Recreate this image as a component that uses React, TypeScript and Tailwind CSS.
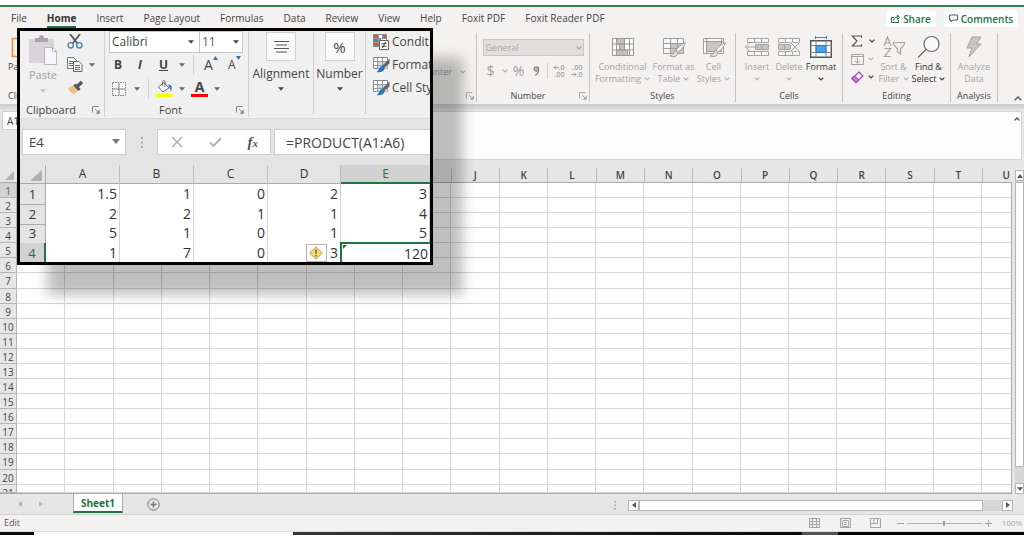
import React from "react";

const COLUMNS = "ABCDEFGHIJKLMNOPQRSTU".split("");
const ROWS = Array.from({ length: 21 }, (_, i) => i + 1);
const TABS = ["File", "Home", "Insert", "Page Layout", "Formulas", "Data", "Review", "View", "Help", "Foxit PDF", "Foxit Reader PDF"];

const CELLS: string[][] = [
  ["1.5", "1", "0", "2", "3"],
  ["2", "2", "1", "1", "4"],
  ["5", "1", "0", "1", "5"],
  ["1", "7", "0", "3", "120"],
];

type Kids = { children?: React.ReactNode };

function Chevron({ className = "text-[#b5b3b1]" }: { className?: string }) {
  return (
    <svg viewBox="0 0 6 4" className={`inline-block h-1 w-1.5 shrink-0 ${className}`} fill="none" stroke="currentColor" strokeWidth="1.3">
      <path d="M.7.6 3 2.9 5.3.6" />
    </svg>
  );
}

function Caret({ className = "text-[#666]" }: { className?: string }) {
  return (
    <svg viewBox="0 0 6 4" className={`h-1 w-1.5 shrink-0 ${className}`} fill="currentColor">
      <path d="M0 .3h6L3 3.7z" />
    </svg>
  );
}

function Launcher({ className = "text-[#a9a9a9]" }: { className?: string }) {
  return (
    <svg viewBox="0 0 8 8" className={`size-2 ${className}`} fill="none" stroke="currentColor">
      <path d="M.5 6.5v-6h6M3 3l3 3" />
      <path d="M7.8 3.5v4.3H3.5z" fill="currentColor" stroke="none" />
    </svg>
  );
}

/* ---------- main ribbon ---------- */

function Group({ label, width, launcher, children }: Kids & { label: string; width: string; launcher?: boolean }) {
  return (
    <section aria-label={label} className={`flex h-[69px] shrink-0 flex-col border-r border-[#c4c2c0] ${width}`}>
      <div className="flex h-[57px] shrink-0 justify-center">{children}</div>
      <div className="flex items-center text-center text-[9px] font-medium leading-[12px] text-[#444]">
        <span className="flex-1">{label}</span>
        {launcher && (
          <button aria-label={`${label} settings`} className="mr-[2px] block">
            <Launcher />
          </button>
        )}
      </div>
    </section>
  );
}

function BigButton({ icon, lines, width, active, arrow }: { icon: React.ReactNode; lines: string[]; width: string; active?: boolean; arrow?: "inline" | "below" }) {
  return (
    <button className={`flex flex-col items-center whitespace-nowrap pt-[3px] text-[9px] leading-[12px] ${width} ${active ? "font-medium text-[#333]" : "text-[#a5a3a1]"}`}>
      <span className="mb-[3px] flex h-[22px] items-center">{icon}</span>
      <span>{lines[0]}</span>
      <span className="flex h-3 items-center gap-[3px]">
        {lines[1]}
        {arrow && <Chevron className={active ? "text-[#444]" : "text-[#b5b3b1]"} />}
      </span>
    </button>
  );
}

function ConditionalIcon() {
  return (
    <svg viewBox="0 0 24 20" className="h-5 w-6" fill="none" stroke="#9a9896">
      <path d="M1.5 1.5h21v17h-21zM1.5 7h21M1.5 13h21M5.500 1.500v17M18.500 1.500v17" fill="#fafafa" />
      <path d="M5.500 1.500h8V7h-8zM5.500 13h11v5.500h-11zM8.500 7h5v6h-5z" fill="#c2c0be" />
    </svg>
  );
}

function TableBrushIcon({ wide }: { wide?: boolean }) {
  return (
    <svg viewBox="0 0 26 22" className="h-[22px] w-[26px]" fill="none" stroke="#a09e9c">
      <path d="M2.500 2.500h20v15h-20z" fill="#f8f8f8" />
      {wide ? <path d="M5.500 5.500h15v10h-15z" fill="#c8c6c4" /> : <path d="M9.500 7.500h13v10h-13z" fill="#c8c6c4" />}
      <path d={wide ? "M2.500 5.500h20M5.500 2.500v15M20.500 2.500v5" : "M2.500 7.500h20M2.500 12.500h20M9.500 2.500v15M16.500 2.500v15"} />
      <path d="M24.500 6.500c-4 1.500-8 5-9.500 8l2 1.800c3-2 6.500-6 7.500-9.800z" fill="#f3f2f1" />
      <path d="M15 14.500c-2.500 0-2.500 4.500-6 5.500 3.500 1.500 8 .3 8-3.700z" fill="#dddbd9" />
    </svg>
  );
}

function InsertIcon() {
  return (
    <svg viewBox="0 0 26 20" className="h-5 w-[26px]" fill="none" stroke="#a5a3a1">
      <path d="M3.500 1.500h21v4h-21zM3.500 14.500h21v4h-21zM10.500 1.500v4M17.500 1.500v4M10.500 14.500v4M17.500 14.500v4" fill="#fafafa" />
      <path d="M11.500 7.500h13v5h-13z" fill="#c8c6c4" />
      <path d="M18 7.500v5M14 10H1.500M5.500 6l-4 4 4 4" />
    </svg>
  );
}

function DeleteIcon() {
  return (
    <svg viewBox="0 0 26 20" className="h-5 w-[26px]" fill="none" stroke="#a5a3a1">
      <path d="M2.500 1.500h21v4h-21zM2.500 14.500h21v4h-21zM9.500 1.500v4M16.500 1.500v4M9.500 14.500v4M16.500 14.500v4" fill="#fafafa" />
      <path d="M2.500 7.500h12v5h-12z" fill="#c8c6c4" />
      <path d="M8.500 7.500v5" />
      <path d="m15 6 8 8M23 6l-8 8" stroke="#f3f2f1" strokeWidth="3" />
      <path d="m15 6 8 8M23 6l-8 8" />
    </svg>
  );
}

function FormatIcon() {
  return (
    <svg viewBox="0 0 24 24" className="h-6 w-6" fill="none">
      <path d="M6 2.500h12M6.500 1v3M17.500 1v3" stroke="#2f8fd6" />
      <path d="M1.700 5.700h20.600v16.600H1.700z" fill="#fff" stroke="#555" strokeWidth="1.400" />
      <path d="M7 5.500v17M17 5.500v17M1.500 10.500h21M1.500 17.500h21" stroke="#888" />
      <path d="M7 10.500h10v7H7z" fill="#4ba3ea" stroke="#1f7ac8" />
    </svg>
  );
}

function SortIcon() {
  return (
    <svg viewBox="0 0 24 22" className="h-[22px] w-6" fill="none" stroke="#a5a3a1" strokeWidth="1.200">
      <path d="m2 10 3.500-9L9 10M3.200 7h4.600M2.500 12.500h6L2.500 20.500h6.300M11.500 6.500h11v1.800L18.500 13v5l-3-2v-3l-4-4.700z" />
    </svg>
  );
}

function DecimalButton({ label, top, bottom, arrowOnTop }: { label: string; top: string; bottom: string; arrowOnTop?: boolean }) {
  const arrow = (
    <svg viewBox="0 0 6 5" className="h-[5px] w-1.5" fill="none" stroke="currentColor">
      <path d={arrowOnTop ? "M6 2.500H1M3 .5l-2 2 2 2" : "M0 2.500h5M3 .5l2 2-2 2"} />
    </svg>
  );
  return (
    <button aria-label={label} className="flex w-[13px] flex-col items-end text-[7px] font-semibold leading-[7px]">
      <span className="flex items-center">{arrowOnTop && arrow}{top}</span>
      <span className="flex items-center">{!arrowOnTop && arrow}{bottom}</span>
    </button>
  );
}

function Ribbon() {
  return (
    <div className="flex h-[74px] overflow-hidden bg-[#f3f2f1] pt-[3px]">
      <section aria-label="Clipboard" className="flex h-[69px] min-w-0 flex-1 flex-col border-r border-[#c4c2c0] pl-2">
        <div className="flex h-[57px] shrink-0 items-start justify-between">
          <button className="flex flex-col items-start pt-[3px] text-[9px] leading-[12px] text-[#444]">
            <svg viewBox="0 0 22 22" className="mb-[3px] ml-[3px] size-[22px]" fill="none" stroke="#e8912d" strokeWidth="1.600">
              <path d="M6 2.500H1.500v18H9M12 2.500h4.500V8" />
            </svg>
            Paste
          </button>
          <button className="mt-[33px] flex items-center gap-2 pr-2.5 text-[9px] leading-[12px] text-[#a5a3a1]">
            Center <Chevron />
          </button>
        </div>
        <div className="flex items-center justify-between pr-[2px] text-[9px] leading-[12px] text-[#444]">
          Clipboard <Launcher />
        </div>
      </section>

      <Group label="Number" width="w-[113px]" launcher>
        <div className="flex w-[101px] flex-col pt-1.5 text-[#a3a1a0]">
          <div className="relative">
            <select aria-label="Number format" disabled className="block h-[17px] w-full appearance-none border border-[#c8c6c4] bg-[#e1dfdd] px-[2px] text-[9px] leading-[14px] text-[#a9a7a5] opacity-100">
              <option>General</option>
            </select>
            <Chevron className="pointer-events-none absolute right-[2px] top-[7px] text-[#a5a3a1]" />
          </div>
          <div className="mt-[5px] flex h-5 items-center">
            <button aria-label="Currency" className="w-4 text-[14px] leading-5">$</button>
            <span className="flex w-3 justify-center"><Chevron /></span>
            <button aria-label="Percent" className="w-4 text-[14px] leading-5">%</button>
            <button aria-label="Comma style" className="flex w-5 justify-center">
              <svg viewBox="0 0 7 10" className="h-2.5 w-[7px]" fill="none" stroke="#888684" strokeWidth="1.200">
                <circle cx="3.400" cy="3" r="2.200" fill="#c4c2c0" />
                <path d="M5.600 3c.4 3-1 5-3.800 6.300" />
              </svg>
            </button>
            <span className="mr-1 h-4 w-px bg-[#cfcdcb]" />
            <DecimalButton label="Increase decimal" top=".0" bottom=".00" arrowOnTop />
            <span className="w-[5px]" />
            <DecimalButton label="Decrease decimal" top=".00" bottom=".0" />
          </div>
        </div>
      </Group>

      <Group label="Styles" width="w-[146px]">
        <BigButton width="w-[58px]" icon={<ConditionalIcon />} lines={["Conditional", "Formatting"]} arrow="inline" />
        <BigButton width="w-11" icon={<TableBrushIcon />} lines={["Format as", "Table"]} arrow="inline" />
        <BigButton width="w-9" icon={<TableBrushIcon wide />} lines={["Cell", "Styles"]} arrow="inline" />
      </Group>

      <Group label="Cells" width="w-[107px]">
        <BigButton width="w-8" icon={<InsertIcon />} lines={["Insert", ""]} arrow="below" />
        <BigButton width="w-8" icon={<DeleteIcon />} lines={["Delete", ""]} arrow="below" />
        <BigButton width="w-8" icon={<FormatIcon />} lines={["Format", ""]} arrow="below" active />
      </Group>

      <Group label="Editing" width="w-[108px]">
        <div className="flex w-[30px] flex-col gap-[2px] pl-[4px]">
          <button aria-label="AutoSum" className="flex h-4 items-center gap-1.5">
            <svg viewBox="0 0 12 12" className="size-3" fill="none" stroke="#555" strokeWidth="1.200">
              <path d="M10.500 2.800V1H1.200L6 6l-4.800 5h9.300V9.200" />
            </svg>
            <Chevron className="text-[#444]" />
          </button>
          <button aria-label="Fill" className="flex h-4 items-center gap-1">
            <svg viewBox="0 0 13 11" className="h-[11px] w-[13px]" fill="none" stroke="#a5a3a1">
              <path d="M.5.500h12v10H.500zM.500 2.500h12M6.500 3.500v5.500M4 6.800l2.500 2.400L9 6.800" />
            </svg>
            <Chevron />
          </button>
          <button aria-label="Clear" className="flex h-4 items-center gap-1">
            <svg viewBox="0 0 13 13" className="size-[13px]" fill="#f8effa" stroke="#a945b5" strokeWidth="1.200">
              <path d="m8 1 4 4-7 6.500-4-4z" />
              <path d="m3.700 5.200 4 4L5 11.500l-4-4z" fill="#c987d2" />
            </svg>
            <Chevron className="text-[#444]" />
          </button>
        </div>
        <BigButton width="w-[34px]" icon={<SortIcon />} lines={["Sort &", "Filter"]} arrow="inline" />
        <BigButton
          width="w-9"
          icon={
            <svg viewBox="0 0 24 24" className="size-6" fill="none" stroke="#666" strokeWidth="1.200">
              <circle cx="14.500" cy="9" r="7.500" fill="#fafafa" />
              <path d="m9 14.500-8 8" />
            </svg>
          }
          lines={["Find &", "Select"]}
          arrow="inline"
          active
        />
      </Group>

      <Group label="Analysis" width="w-[47px]">
        <BigButton
          width="w-10"
          icon={
            <svg viewBox="0 0 18 22" className="h-[22px] w-[18px]" fill="#c8c6c4" stroke="#a5a3a1">
              <path d="M7 1h9l-4.500 7H16L4 21l3-9H2z" />
            </svg>
          }
          lines={["Analyze", "Data"]}
        />
      </Group>

      <div className="flex w-[26px] items-end justify-end pb-[3px] pr-[2px]">
        <button aria-label="Collapse ribbon">
          <svg viewBox="0 0 8 5" className="h-[5px] w-2" fill="none" stroke="#555" strokeWidth="1.300"><path d="m.7 4.300 3.300-3.300 3.300 3.300" /></svg>
        </button>
      </div>
    </div>
  );
}

function TabBar() {
  return (
    <div className="flex h-[23px] items-start justify-between bg-[#f3f2f1] pl-[11px] pr-[6px]">
      <nav className="flex gap-5 whitespace-nowrap text-[10px] leading-[18px] text-[#444]">
        {TABS.map((t) => (
          <a key={t} href="#" className={t === "Home" ? "mt-[2px] h-[19px] border-b-2 border-[#217346] font-bold text-[#333]" : "mt-[2px]"}>
            {t}
          </a>
        ))}
      </nav>
      <div className="mt-[3px] flex gap-2 text-[10px] font-semibold leading-[16px] text-[#217346]">
        <button className="flex h-[17px] w-[50px] items-center justify-center gap-[3px] rounded-sm bg-white">
          <svg viewBox="0 0 9 9" className="size-[9px]" fill="none" stroke="#217346"><path d="M3 3.500H.500v5h7V6M2.500 6.500C3 4 4.500 3 6.500 3V1l2 2.500-2 2V4" /></svg>
          Share
        </button>
        <button className="flex h-[17px] w-[74px] items-center justify-center gap-[3px] rounded-sm bg-white">
          <svg viewBox="0 0 9 9" className="size-[9px]" fill="none" stroke="#217346"><path d="M.500 1h8v5H4L2 8V6H.500z" /></svg>
          Comments
        </button>
      </div>
    </div>
  );
}

/* ---------- sheet ---------- */

function Sheet() {
  const cols = "grid grid-cols-[17px_repeat(20,minmax(0,5fr))_minmax(0,3fr)]";
  return (
    <div className="flex min-h-0 flex-1 bg-[#e6e6e6]">
      <table className="flex min-w-0 flex-1 flex-col text-[#444]">
        <thead className="block">
          <tr className={`${cols} h-[23px] border-b border-[#ababab] pt-2`}>
            <th className="flex items-end justify-end pb-[2px] pr-[3px]">
              <svg viewBox="0 0 9 9" className="size-[9px]" fill="#b4b4b4"><path d="M9 0v9H0z" /></svg>
            </th>
            {COLUMNS.map((c) => (
              <th key={c} className={c === "U" ? "pr-[2px] text-right text-[10px] font-semibold leading-[14px]" : "border-r border-[#bdbdbd] text-center text-[10px] font-semibold leading-[14px]"}>
                {c}
              </th>
            ))}
          </tr>
        </thead>
        <tbody className="grid min-h-0 flex-1 grid-rows-[repeat(20,minmax(0,9fr))_minmax(0,5fr)] overflow-hidden border-b border-r border-[#ababab]">
          {ROWS.map((r) => (
            <tr key={r} className={`${cols} min-h-0`}>
              <th className={`overflow-hidden border-b border-r border-[#b5b5b5] text-center text-[10px] font-medium leading-[16px] ${r === 1 ? "bg-[#d2d2d2] text-[#217346]" : ""}`}>{r}</th>
              {COLUMNS.map((c) => (
                <td key={c} className={c === "U" ? "border-b border-[#d6d6d6] bg-white" : "border-b border-r border-[#d6d6d6] bg-white"} />
              ))}
            </tr>
          ))}
        </tbody>
      </table>
      <div className="flex w-3 flex-col items-end pl-[3px] pt-[10px]">
        <button aria-label="Scroll up" className="flex h-[11px] w-full items-center justify-center border border-[#b5b5b5] bg-white">
          <svg viewBox="0 0 6 4" className="h-1 w-1.5" fill="#555"><path d="M3 0l3 4H0z" /></svg>
        </button>
        <div className="flex w-full flex-1 flex-col bg-[#d6d6d6] pb-4 pt-px">
          <div className="flex-1 border border-[#b5b5b5] bg-white" />
        </div>
        <button aria-label="Scroll down" className="flex h-[11px] w-full items-center justify-center border border-[#b5b5b5] bg-white">
          <Caret className="text-[#555]" />
        </button>
      </div>
    </div>
  );
}

function SheetTabs() {
  return (
    <div className="flex h-[21px] items-start border-b border-[#d2d2d2] bg-[#e6e6e6]">
      <div className="flex h-5 w-[73px] items-center justify-between pl-[18px] pr-[30px]">
        <button aria-label="Previous sheet"><svg viewBox="0 0 4 6" className="h-1.5 w-1" fill="#b5b5b5"><path d="M4 0v6L0 3z" /></svg></button>
        <button aria-label="Next sheet"><svg viewBox="0 0 4 6" className="h-1.5 w-1" fill="#b5b5b5"><path d="M0 0v6l4-3z" /></svg></button>
      </div>
      <button className="h-[19px] w-[50px] border-x border-b-2 border-x-[#ababab] border-b-[#217346] bg-white pt-[2px] text-[10px] font-bold leading-[15px] text-[#217346]">Sheet1</button>
      <button aria-label="New sheet" className="ml-6 mt-1">
        <svg viewBox="0 0 13 13" className="size-[13px]" fill="none" stroke="#777"><circle cx="6.500" cy="6.500" r="5.700" /><path d="M6.500 3.500v6M3.500 6.500h6" strokeWidth="1.500" /></svg>
      </button>
      <div className="ml-auto flex h-full w-[40%] items-center pr-[11px] pt-[2px]">
        <span className="mr-3">
          <svg viewBox="0 0 2 9" className="h-[9px] w-[2px]" fill="#aaa"><path d="M0 0h2v1.500H0zM0 3.500h2V5H0zM0 7h2v1.500H0z" /></svg>
        </span>
        <button aria-label="Scroll left" className="flex h-[11px] w-[11px] items-center justify-center border border-[#b5b5b5] bg-white">
          <svg viewBox="0 0 4 6" className="h-1.5 w-1" fill="#555"><path d="M4 0v6L0 3z" /></svg>
        </button>
        <div className="h-[11px] flex-1 bg-[#d6d6d6] pr-[19px]">
          <div className="h-full border border-[#b5b5b5] bg-white" />
        </div>
        <button aria-label="Scroll right" className="flex h-[11px] w-[11px] items-center justify-center border border-[#b5b5b5] bg-white">
          <svg viewBox="0 0 4 6" className="h-1.5 w-1" fill="#555"><path d="M0 0v6l4-3z" /></svg>
        </button>
      </div>
    </div>
  );
}

function StatusBar() {
  const view = "h-2.5 w-[11px]";
  return (
    <div className="flex h-[17px] items-center justify-between border-b border-[#dcdcdc] bg-[#f3f2f1] pl-1 pr-[2px] text-[9px] leading-[16px] text-[#555]">
      <span>Edit</span>
      <div className="flex items-center text-[#a5a3a1]">
        <button aria-label="Normal view" className="mr-5"><svg viewBox="0 0 11 10" className={view} fill="none" stroke="currentColor"><path d="M.500.500h10v9H.500zM.500 3.500h10M.500 6.500h10M3.500.500v9M7.500.500v9" /></svg></button>
        <button aria-label="Page layout view" className="mr-[19px]"><svg viewBox="0 0 11 10" className={view} fill="none" stroke="currentColor"><path d="M.500.500h10v9H.500zM2.500 2.500h6v6h-6zM4 4.500h3M4 6.500h3" /></svg></button>
        <button aria-label="Page break view" className="mr-4"><svg viewBox="0 0 11 10" className={view} fill="none" stroke="currentColor"><path d="M.500.500h10v9H.500zM.500 5.500h7v-5M4 .500v5" /></svg></button>
        <button aria-label="Zoom out"><svg viewBox="0 0 7 7" className="size-[7px]" stroke="currentColor"><path d="M0 3.500h7" /></svg></button>
        <div className="mx-[3px] flex h-4 w-[75px] items-center">
          <input aria-label="Zoom" type="range" defaultValue={50} className="h-px w-full appearance-none bg-[#b5b3b1] [&::-webkit-slider-thumb]:h-[5px] [&::-webkit-slider-thumb]:w-[2px] [&::-webkit-slider-thumb]:appearance-none [&::-webkit-slider-thumb]:bg-[#a5a3a1]" />
        </div>
        <button aria-label="Zoom in" className="mr-[10px]"><svg viewBox="0 0 7 7" className="size-[7px]" stroke="currentColor"><path d="M0 3.500h7M3.500 0v7" /></svg></button>
        <span className="text-[8px]">100%</span>
      </div>
    </div>
  );
}

/* ---------- enlarged view ---------- */

function StyleIcon({ conditional }: { conditional?: boolean }) {
  return conditional ? (
    <svg viewBox="0 0 17 16" className="h-4 w-[17px] shrink-0" fill="none">
      <path d="M.500.500h13v12H.500z" fill="#fff" stroke="#888" />
      <path d="M1 1h5v3H1zM1 8h4v4H1z" fill="#e0532c" /><path d="M1 4h7v4H1z" fill="#4a87c5" /><path d="M9 1h4v3H9z" fill="#e0532c" />
      <path d="M.500 4.500h13M.500 8.500h6M5.500.500v12M9.500.500v5" stroke="#999" />
      <path d="M6.500 6.500h9v9h-9z" fill="#fff" stroke="#666" /><path d="M8.500 9.700h5M8.500 12.300h5M12.500 8 9.500 14" stroke="#444" />
    </svg>
  ) : (
    <svg viewBox="0 0 17 16" className="h-4 w-[17px] shrink-0" fill="none">
      <path d="M.500.500h14v11H.500z" fill="#fff" stroke="#888" /><path d="M4.500 4.500h10v7h-10z" fill="#c9dcef" />
      <path d="M.500 4.500h14M.500 8.500h14M4.500.500v11M9.500.500v11" stroke="#999" />
      <path d="M16.500 1.500v5L11 11l-2-2z" fill="#666" /><path d="M9 9c2 0 3.500 2 2 4-1.500 2-4.500 2.500-7.500 2C6 14 6 10 9 9z" fill="#2e75b6" />
    </svg>
  );
}

function DropGroup({ label, width, children }: Kids & { label: string; width: string }) {
  return (
    <button className={`flex h-[83px] flex-col items-center border-r border-[#d0d0d0] pt-px text-[12px] font-medium leading-[16px] text-[#444] ${width}`}>
      <span className="mb-[5px] flex h-[29px] w-[30px] items-center justify-center border border-[#d0d0d0] bg-[#fafafa] text-[15px]">{children}</span>
      {label}
      <Caret className="mt-[5px]" />
    </button>
  );
}

function InsetRibbon() {
  return (
    <div className="flex h-[88px] border-b border-[#dadada] bg-[#f0f0f0] text-[#444]">
      <section aria-label="Paste options" className="flex h-[86px] w-[85px] shrink-0 flex-col border-r border-[#d0d0d0]">
        <div className="flex h-[72px] shrink-0">
          <button className="flex w-11 flex-col items-center pl-[2px] pt-1 text-[11px] leading-[15px] text-[#a0a0a0]">
            <svg viewBox="0 0 30 32" className="h-8 w-[30px]" fill="none">
              <path d="M1 4h25v24H1z" fill="#d8d4da" /><path d="M7 3h4c0-4 5-4 5 0h4v4H7z" fill="#a8a4aa" />
              <path d="M16.500 12.500h8l4 4v13h-12z" fill="#f8f6fa" stroke="#b9b4bd" /><path d="M24.500 12.500v4h4" stroke="#b9b4bd" />
            </svg>
            Paste
            <Caret className="mt-[7px] text-[#c0c0c0]" />
          </button>
          <div className="flex flex-col gap-2 pl-[3px] pt-[3px]">
            <button aria-label="Cut">
              <svg viewBox="0 0 16 15" className="h-[15px] w-4" fill="none">
                <path d="m3 0 7.500 9.500M13 0 5.500 9.500" stroke="#555" strokeWidth="1.800" />
                <circle cx="3.700" cy="11.300" r="2.700" stroke="#4a80b8" strokeWidth="1.400" /><circle cx="12.300" cy="11.300" r="2.700" stroke="#4a80b8" strokeWidth="1.400" />
              </svg>
            </button>
            <button aria-label="Copy" className="flex items-center gap-1.5">
              <svg viewBox="0 0 16 15" className="h-[15px] w-4" fill="#f5f9fd" stroke="#3f6f9f">
                <path d="M.500.500h6l3 3v8h-9z" stroke="#777" /><path d="M2 4.500h4M2 6.500h4M2 8.500h4" />
                <path d="M6.500 4.500h5.500l3 3v7h-8.500z" stroke="#666" /><path d="M8 8.500h5M8 10.500h5M8 12.500h5" />
              </svg>
              <Caret />
            </button>
            <button aria-label="Format painter">
              <svg viewBox="0 0 17 15" className="h-[15px] w-[17px]" fill="none">
                <path d="m1 8 6-3 4 5-4 4.500C4.500 13 2 11 1 8z" fill="#ecc27e" /><path d="m7.500 4.500 5 5.500" stroke="#555" strokeWidth="3" /><path d="m10 6.500 5-4.500" stroke="#555" strokeWidth="3.500" />
              </svg>
            </button>
          </div>
        </div>
        <div className="flex items-center justify-between pl-1.5 pr-1 text-[11px] font-medium leading-[14px]">Clipboard <Launcher className="text-[#888]" /></div>
      </section>

      <section aria-label="Font" className="flex h-[86px] w-36 shrink-0 flex-col border-r border-[#d0d0d0]">
        <div className="flex pl-1">
          <div className="relative w-[91px]">
            <select aria-label="Font name" className="block h-[22px] w-full appearance-none border border-[#c6c6c6] bg-white px-[2px] text-[12px] font-medium leading-[18px]"><option>Calibri</option></select>
            <Caret className="pointer-events-none absolute right-[6px] top-[9px]" />
          </div>
          <div className="relative -ml-px w-11">
            <select aria-label="Font size" className="block h-[22px] w-full appearance-none border border-[#c6c6c6] bg-white px-[2px] text-[12px] leading-[18px] text-[#5f5575]"><option>11</option></select>
            <Caret className="pointer-events-none absolute right-[4px] top-[9px]" />
          </div>
        </div>
        <div className="mt-[2px] flex h-5 items-center pl-[9px] text-[12px] leading-5">
          <button className="w-[22px] text-left font-bold">B</button>
          <button className="w-[23px] pl-[2px] text-left font-bold italic">I</button>
          <button className="w-5 text-left font-bold underline">U</button>
          <Caret />
          <span className="ml-2 mr-[10px] h-5 w-px bg-[#d0d0d0]" />
          <button aria-label="Increase font size" className="relative w-6 text-left text-[14px] font-medium">A
            <svg viewBox="0 0 5 4" className="absolute left-[9px] top-px h-1 w-[5px]" fill="#2e75b6"><path d="M2.500 0 5 4H0z" /></svg>
          </button>
          <button aria-label="Decrease font size" className="relative w-4 text-left text-[12px] font-medium">A
            <svg viewBox="0 0 5 4" className="absolute left-[8px] top-px h-1 w-[5px]" fill="#2e75b6"><path d="M0 0h5L2.500 4z" /></svg>
          </button>
        </div>
        <div className="mb-[3px] mt-[2px] flex h-[23px] shrink-0 items-center pl-[7px]">
          <button aria-label="Borders" className="mr-2"><svg viewBox="0 0 14 14" className="size-3.5" fill="none" stroke="#777"><path d="M.500.500h13v13H.500z" strokeDasharray="1.500 1" fill="#fff" /><path d="M7 1v12M1 7h12" /></svg></button>
          <Caret />
          <span className="ml-2 mr-[7px] h-5 w-px bg-[#d0d0d0]" />
          <button aria-label="Fill color" className="mr-1.5">
            <svg viewBox="0 0 17 17" className="size-[17px]" fill="none">
              <path d="M2.500 7 8 2.500l5 5.500-6 4z" fill="#fff" stroke="#666" /><path d="M6.500 5.500V1.500c1-1.500 2.500-1 2.500 0V7" stroke="#666" /><path d="M12 4.500c4 0 4.500 3 3 7-1-3-1.500-4-3-7z" fill="#2e75b6" /><path d="M0 13.500h16.500V17H0z" fill="#ffff00" />
            </svg>
          </button>
          <Caret />
          <button aria-label="Font color" className="ml-1.5 mr-1.5 h-[17px] w-[17px] border-b-[3px] border-[#ff0000] text-center text-[14px] font-bold leading-[14px]">A</button>
          <Caret />
        </div>
        <div className="flex items-center pl-3 pr-1 text-center text-[11px] font-medium leading-[14px]"><span className="flex-1 pr-3">Font</span> <Launcher className="text-[#888]" /></div>
      </section>

      <DropGroup label="Alignment" width="w-[65px] shrink-0">
        <svg viewBox="0 0 15 12" className="h-3 w-[15px]" stroke="#555"><path d="M0 .500h15M2 4h11M0 7.500h15M2 11h11" /></svg>
      </DropGroup>
      <DropGroup label="Number" width="w-[52px] shrink-0">%</DropGroup>

      <div className="flex min-w-0 flex-1 flex-col gap-[7px] overflow-hidden whitespace-nowrap pl-[7px] pt-[3px] text-[12px] font-medium leading-4">
        <button className="flex items-center gap-[2px]"><StyleIcon conditional />Condit</button>
        <button className="flex items-center gap-[2px]"><StyleIcon />Format</button>
        <button className="flex items-center gap-[2px]"><StyleIcon />Cell Sty</button>
      </div>
    </div>
  );
}

function InsetFormulaBar() {
  return (
    <div className="flex h-[46px] items-start pl-[2px] pt-[10px] text-[#444]">
      <div className="relative w-[104px] shrink-0">
        <input aria-label="Cell name" defaultValue="E4" className="block h-[26px] w-full border border-[#cdcdcd] bg-white px-1.5 text-[13px]" />
        <svg viewBox="0 0 8 5" className="absolute right-[6px] top-[10px] h-[5px] w-2" fill="#777"><path d="M0 0h8L4 5z" /></svg>
      </div>
      <span className="flex h-[26px] w-[31px] shrink-0 items-center justify-center"><svg viewBox="0 0 2 11" className="h-[11px] w-[2px]" fill="#aaa"><path d="M0 0h2v2H0zM0 4.500h2v2H0zM0 9h2v2H0z" /></svg></span>
      <div className="flex h-[26px] w-[114px] shrink-0 items-center justify-between border border-[#cdcdcd] bg-white pl-[13px] pr-3">
        <button aria-label="Cancel"><svg viewBox="0 0 12 10" className="h-2.5 w-3" stroke="#b5b5b5" strokeWidth="1.600"><path d="m1 0 10 10M11 0 1 10" /></svg></button>
        <button aria-label="Enter"><svg viewBox="0 0 13 10" className="h-2.5 w-[13px]" fill="none" stroke="#b5b5b5" strokeWidth="2"><path d="m1 5.500 3.500 3.500L12 1" /></svg></button>
        <button className="flex items-baseline font-['Liberation_Serif',serif] text-[15px] font-bold italic leading-5 text-[#555]">f<span className="text-[11px]">x</span></button>
      </div>
      <input aria-label="Formula" defaultValue="=PRODUCT(A1:A6)" className="ml-[3px] block h-[26px] min-w-0 flex-1 border border-r-0 border-[#cdcdcd] bg-white px-[11px] text-[14px]" />
    </div>
  );
}

function InsetSheet() {
  const cols = "grid grid-cols-[26px_74px_74px_74px_73px_minmax(0,1fr)]";
  return (
    <table className="block text-[#333]">
      <thead className="block">
        <tr className={`${cols} h-[19px] border-b border-[#ababab]`}>
          <th className="flex items-end justify-end border-r border-[#ababab] pb-[3px] pr-[3px]"><svg viewBox="0 0 12 11" className="h-[11px] w-3" fill="#b0b0b0"><path d="M12 0v11H0z" /></svg></th>
          {["A", "B", "C", "D", "E"].map((c) => (
            <th key={c} className={c === "E" ? "h-[19px] border-b-2 border-[#217346] bg-[#d2d2d2] text-[12px] font-medium leading-[18px] text-[#217346]" : "border-r border-[#bdbdbd] text-[12px] font-medium leading-[18px]"}>{c}</th>
          ))}
        </tr>
      </thead>
      <tbody className="grid h-[78px] grid-rows-4">
        {CELLS.map((row, r) => (
          <tr key={r} className={`${cols} min-h-0`}>
            <th className={`border-b text-[13px] font-normal leading-[20px] ${r === 3 ? "border-r-2 border-[#217346] border-b-transparent bg-[#d2d2d2] text-[#217346]" : "border-r border-[#ababab]"}`}>{r + 1}</th>
            {row.map((v, c) => {
              const selected = r === 3 && c === 4;
              return (
                <td key={c} className={selected ? "relative -ml-px -mt-px border-l-2 border-t-2 border-[#217346] bg-white pr-[2px] text-right text-[14px] leading-[19px]" : "flex items-start justify-end border-b border-r border-[#d4d4d4] bg-white pr-[2px] text-right text-[14px] leading-[20px]"}>
                  {selected && <svg viewBox="0 0 4 4" className="absolute left-px top-px size-1" fill="#217346"><path d="M0 0h4L0 4z" /></svg>}
                  {r === 3 && c === 3 && (
                    <button aria-label="Error options" className="mr-[3px] mt-px flex h-[18px] w-[21px] items-center justify-center border border-[#b5b5b5] bg-white">
                      <svg viewBox="0 0 14 14" className="size-3.5"><path d="m7 .700 6.300 6.300L7 13.300.700 7z" fill="#f5dc6a" stroke="#a89a60" /><path d="M7 3.500v4.200M7 9v1.500" stroke="#555" strokeWidth="1.400" /></svg>
                    </button>
                  )}
                  {v}
                </td>
              );
            })}
          </tr>
        ))}
      </tbody>
    </table>
  );
}

export default function App() {
  return (
    <main className="relative flex h-screen min-h-96 flex-col overflow-hidden bg-white font-['Open_Sans','Noto_Sans',sans-serif]">
      <div className="h-[7px] shrink-0 border-b-2 border-[#2f8555]" />
      <TabBar />
      <Ribbon />
      <div className="h-[7px] shrink-0 bg-linear-to-b from-[#cbcbcb] to-[#e6e6e6]" />
      <div className="flex h-[49px] shrink-0 items-start bg-[#e6e6e6] pl-[2px] pr-[2px]">
        <input aria-label="Name box" defaultValue="A1" className="h-[19px] w-20 border border-[#d0d0d0] bg-white px-1 text-[10px] text-[#444]" />
        <div className="relative ml-24 h-full flex-1">
          <textarea aria-label="Formula bar" className="block h-full w-full resize-none border border-[#d6d6d6] bg-[#fdfdfd]" />
          <button aria-label="Collapse formula bar" className="absolute right-[2px] top-[6px] block">
            <svg viewBox="0 0 6 4" className="h-1 w-1.5" fill="none" stroke="#555" strokeWidth="1.300"><path d="m.5 3.500 2.500-2.500 2.500 2.500" /></svg>
          </button>
        </div>
      </div>
      <Sheet />
      <SheetTabs />
      <StatusBar />
      <div className="mb-[3px] flex h-[3px] shrink-0">
        <div className="w-[34px] bg-[#0d0b08]" />
        <div className="w-[259px] bg-[#fafafa]" />
        <div className="flex-1 bg-linear-to-r from-[#3a3835] to-[#0a0908]" />
        <div className="w-9 bg-[#55524f]" />
        <div className="w-[186px] bg-[#050505]" />
      </div>

      <aside aria-label="Enlarged view" className="absolute left-[17px] top-[28px] w-[416px] overflow-hidden border-[3px] border-black bg-[#e4e4e4] shadow-[30px_30px_12px_rgba(0,0,0,0.25)]">
        <InsetRibbon />
        <InsetFormulaBar />
        <InsetSheet />
      </aside>
    </main>
  );
}
